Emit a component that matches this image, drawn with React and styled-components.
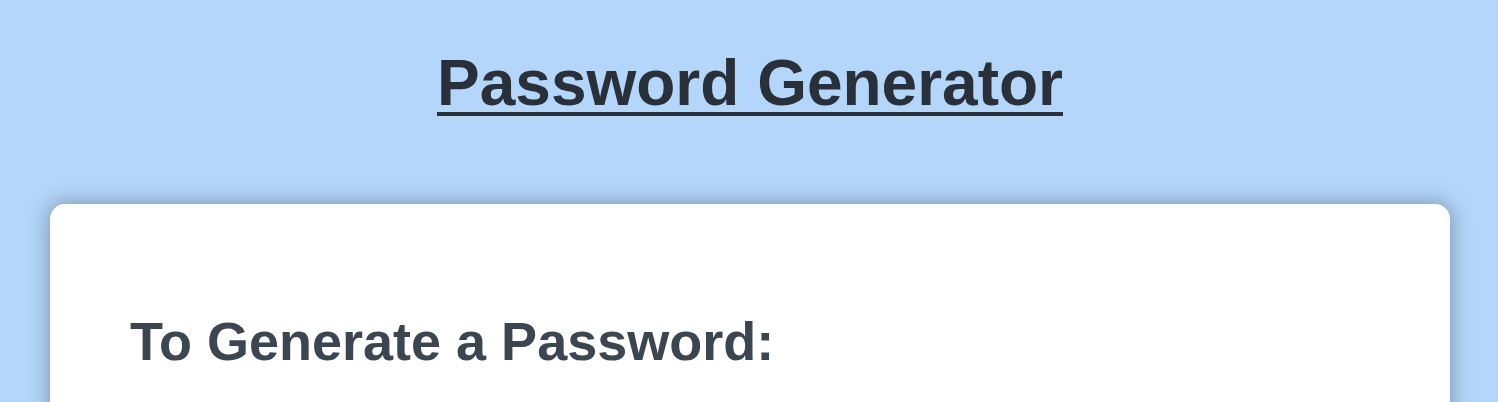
import styled, { createGlobalStyle } from "styled-components";

const GlobalStyle = createGlobalStyle`
  html, body {
    margin: 0;
    padding: 0;
    background-color: #b3d6fa;
    font-family: "Liberation Sans", Arial, Helvetica, sans-serif;
  }
`;

const Page = styled.div`
  display: flex;
  flex-direction: column;
  align-items: center;
  padding: 46px 48px 40px 50px;
  min-height: 100vh;
  box-sizing: border-box;
`;

const Title = styled.h1`
  margin: 0 0 84px;
  font-size: 64px;
  font-weight: 700;
  line-height: normal;
  color: #29303a;
  text-decoration: underline;
  text-decoration-thickness: 4px;
  text-underline-offset: 7px;
`;

const Card = styled.section`
  align-self: stretch;
  background-color: #ffffff;
  border-radius: 15px;
  box-shadow: 0 0 20px 2px rgba(50, 55, 70, 0.38);
  padding: 106px 80px 80px;
  min-height: 400px;
`;

const Heading = styled.h2`
  margin: 0;
  font-size: 54px;
  font-weight: 700;
  line-height: normal;
  color: #3c4651;
`;

export default function App() {
  return (
    <>
      <GlobalStyle />
      <Page>
        <Title>Password Generator</Title>
        <Card>
          <Heading>To Generate a Password:</Heading>
        </Card>
      </Page>
    </>
  );
}
